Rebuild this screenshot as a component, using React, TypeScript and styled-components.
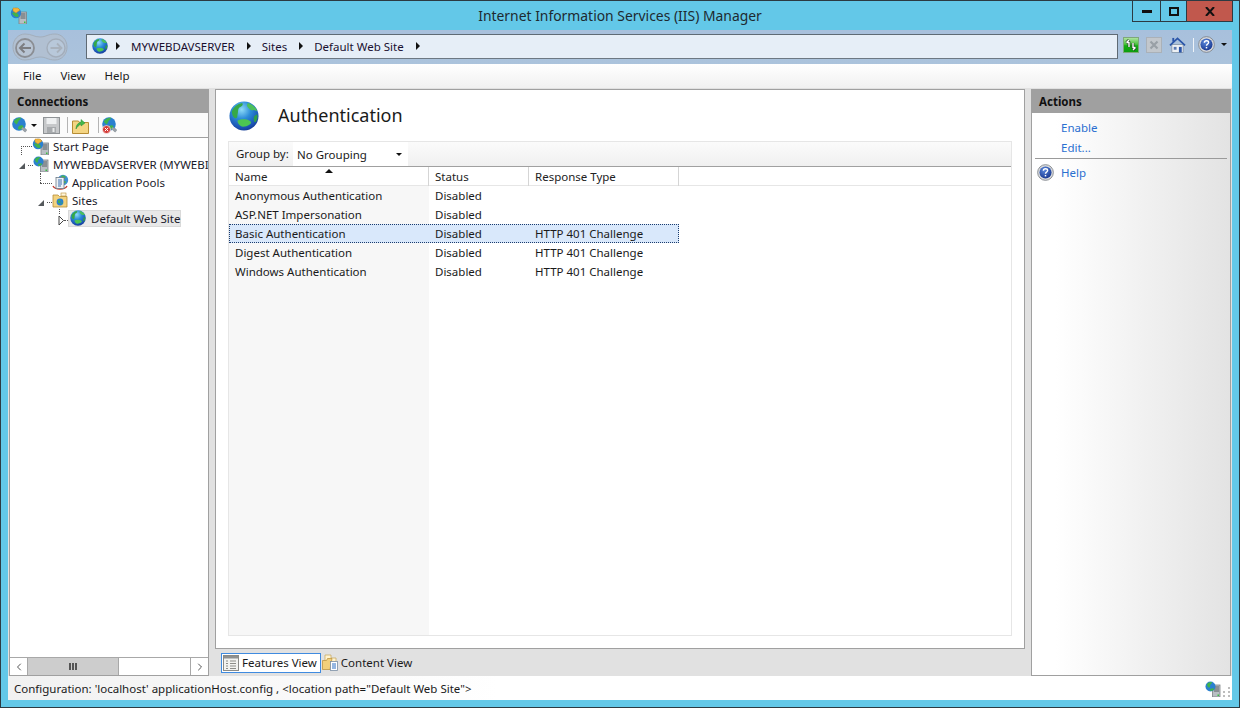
import { useId } from 'react';
import styled, { createGlobalStyle } from 'styled-components';
import { ChevronLeft, ChevronRight } from 'lucide-react';

const GlobalStyle = createGlobalStyle`
  html, body { margin: 0; padding: 0; }
  body {
    font-family: "Noto Sans", "Liberation Sans", sans-serif;
    font-size: 11.5px;
    color: #1a1a1a;
    overflow: hidden;
  }
`;

function Globe({ size = 16 }: { size?: number }) {
  const id = useId();
  return (
    <svg width={size} height={size} viewBox="0 0 32 32" style={{ flex: 'none' }}>
      <defs>
        <radialGradient id={id} cx="0.42" cy="0.28" r="0.8">
          <stop offset="0" stopColor="#8fdcf8" />
          <stop offset="0.4" stopColor="#2b8bd8" />
          <stop offset="0.8" stopColor="#1a4fb0" />
          <stop offset="1" stopColor="#0f2f80" />
        </radialGradient>
      </defs>
      <circle cx="16" cy="16" r="15.500" fill={`url(#${id})`} />
      <path d="M3 11c2-5 6-8 11-9 2 2-1 4-3 5-2 2-1 5-2 8 0 3-1 4-3 3-2-1-3-4-3-7z" fill="#36a848" />
      <path d="M20 2c4 1 8 4 10 8-2 1-3-1-5 0-2 0-4-2-6-5z" fill="#4cc05a" />
      <path d="M9 21c4-2 9-2 13 0 2 1 2 3 0 4-3 2-7 3-9 2-2-1-4-4-4-6z" fill="#4cc552" />
      <path d="M27 16l3-2c1 3 0 7-2 9-2-1-2-5-1-7z" fill="#2f9f48" />
    </svg>
  );
}

function ServerGlobe({ size = 16 }: { size?: number }) {
  return (
    <svg width={size} height={size} viewBox="0 0 16 16" style={{ flex: 'none' }}>
      <rect x="7.500" y="4" width="7.500" height="12" fill="#b9bec3" stroke="#7d8286" strokeWidth="0.8" />
      <path d="M9 6h5M9 8h5M9 10h5" stroke="#5b6065" strokeWidth="1" />
      <rect x="12.500" y="13.500" width="1.500" height="1.500" fill="#36c23f" />
      <circle cx="5.500" cy="5.500" r="5" fill="#2a80cf" />
      <path d="M2 3c2-2 4-2 5-2 0 2-2 2-2 4s-1 2-2 1-1-2-1-3zM5 8c2-1 4-1 4 0s-2 2-3 2-1-1-1-2z" fill="#3fb34c" />
    </svg>
  );
}

function StartPageIcon() {
  return (
    <svg width="17" height="17" viewBox="0 0 17 17" style={{ flex: 'none' }}>
      <rect x="9" y="5" width="7.500" height="12" fill="#b9bec3" stroke="#7d8286" strokeWidth="0.8" />
      <path d="M10.500 7h5M10.500 9h5M10.500 11h5" stroke="#5b6065" strokeWidth="1" />
      <rect x="14" y="14.500" width="1.500" height="1.500" fill="#36c23f" />
      <circle cx="6" cy="6" r="5.200" fill="#2a80cf" />
      <path d="M2 6c1 2 3 4 5 4s2-2 1-3-4-2-6-1z" fill="#3fb34c" />
      <path d="M3 1h5l2 2-4 3-3-2z" fill="#f3b73c" stroke="#c98a1b" strokeWidth="0.5" />
    </svg>
  );
}

function PoolsIcon() {
  return (
    <svg width="17" height="17" viewBox="0 0 17 17" style={{ flex: 'none' }}>
      <circle cx="11" cy="6" r="5.200" fill="#3f8fd6" />
      <path d="M9 2c2-1 4 0 5 1-1 2-3 2-4 1zM11 7c2 0 3 0 3 1s-2 2-3 1z" fill="#46b455" />
      <path d="M1 12c1 2 4 3 7 3s6-1 7-3" fill="none" stroke="#c43a2e" strokeWidth="1.400" />
      <rect x="4" y="3.500" width="8" height="11" fill="#eef2f6" stroke="#6c7a88" strokeWidth="0.8" />
      <path d="M6 6h4M6 8h4M6 10h4M6 12h3" stroke="#3f6fae" strokeWidth="1" />
    </svg>
  );
}

function SitesIcon() {
  return (
    <svg width="16" height="16" viewBox="0 0 16 16" style={{ flex: 'none' }}>
      <path d="M1 3h5l1.500 1.500H15V15H1z" fill="#f2d27f" stroke="#b78d35" strokeWidth="0.8" />
      <rect x="9" y="1" width="5" height="3" fill="#fff6dc" stroke="#b78d35" strokeWidth="0.6" />
      <circle cx="8" cy="10" r="3.400" fill="#2a80cf" />
      <path d="M6 8.500c1.500-.5 3 .5 2.500 1.500S7 12 6.500 11s-1-2-.5-2.500zM9 11l1.500-.5-.5 2z" fill="#3fb34c" />
    </svg>
  );
}

function ConnectGlobe({ bad }: { bad?: boolean }) {
  return (
    <svg width="17" height="17" viewBox="0 0 17 17" style={{ flex: 'none' }}>
      <path d="M9 9l5 5" stroke="#8c949b" strokeWidth="3" />
      <circle cx="7" cy="7" r="6.800" fill="#2a80cf" />
      <path d="M2 4c2-3 5-3.500 7-3.500 0 2-2 2.500-3 4.500s-1 3-2 2-2.500-2-2-3zM7 9c2-1 4.500-1 4.500 1s-3 2.500-4.500 2.500-1-2.500 0-3.500z" fill="#3fb34c" />
      <path d="M10 11l4 3.500" stroke="#9aa2a8" strokeWidth="2.500" />
      {bad && (
        <>
          <circle cx="4.500" cy="12.500" r="4" fill="#d43a36" stroke="#fff" strokeWidth="0.6" />
          <path d="M2.800 10.800l3.400 3.400M6.200 10.800l-3.400 3.400" stroke="#fff" strokeWidth="1" />
        </>
      )}
    </svg>
  );
}

function SaveIcon() {
  return (
    <svg width="17" height="17" viewBox="0 0 17 17" style={{ flex: 'none' }}>
      <rect x="0.500" y="0.500" width="16" height="16" fill="#c6c8ca" stroke="#8f9396" />
      <rect x="3.500" y="1" width="10" height="6" fill="#eef0f1" />
      <rect x="4" y="10" width="9" height="6" fill="#a7aaad" />
      <rect x="9.500" y="11" width="2" height="4" fill="#e8e9ea" />
    </svg>
  );
}

function FolderUpIcon() {
  return (
    <svg width="17" height="17" viewBox="0 0 17 17" style={{ flex: 'none' }}>
      <path d="M0.500 4h6l1 1.500h9V16.500H.5z" fill="#f4d583" stroke="#b78d35" />
      <path d="M4 12c0-4 2-6 5-7V2.500l4 3.500-4 3V7C7 8 5 10 4 12z" fill="#44b84a" stroke="#2b8a34" strokeWidth="0.5" />
    </svg>
  );
}

function RefreshIcon() {
  return (
    <svg width="16" height="16" viewBox="0 0 16 16" style={{ flex: 'none' }}>
      <defs>
        <linearGradient id="refresh-bg" x1="0" y1="0" x2="0" y2="1">
          <stop offset="0" stopColor="#b4e6a6" />
          <stop offset="0.45" stopColor="#4cc23e" />
          <stop offset="0.55" stopColor="#15ad14" />
          <stop offset="1" stopColor="#0c9c0e" />
        </linearGradient>
      </defs>
      <rect x="0.500" y="0.500" width="15" height="15" fill="url(#refresh-bg)" stroke="#7ea87a" />
      <path d="M6 10V5.500H3.500M3.500 5.500L6 3" fill="none" stroke="#1c2a1c" strokeWidth="2.600" />
      <path d="M10 6v4.500h2.500M12.500 10.500L10 13" fill="none" stroke="#1c2a1c" strokeWidth="2.600" />
      <path d="M6 10V5.500H3.500M3.500 5.500L6 3" fill="none" stroke="#fff" strokeWidth="1.400" />
      <path d="M10 6v4.500h2.500M12.500 10.500L10 13" fill="none" stroke="#fff" strokeWidth="1.400" />
    </svg>
  );
}

function StopIcon() {
  return (
    <svg width="16" height="16" viewBox="0 0 16 16" style={{ flex: 'none' }}>
      <rect x="0.500" y="0.500" width="15" height="15" fill="#c2c7cc" stroke="#aab1b8" />
      <path d="M4.500 4.500l7 7M11.500 4.500l-7 7" stroke="#99a0a6" strokeWidth="2.200" />
    </svg>
  );
}

function HomeIcon() {
  return (
    <svg width="17" height="16" viewBox="0 0 18 17" style={{ flex: 'none' }}>
      <path d="M3 8h12v8.500H3z" fill="#eef1f4" stroke="#7b8c9e" strokeWidth="0.8" />
      <path d="M1 9L9 1.500 17 9" fill="none" stroke="#2a55a8" strokeWidth="1.800" />
      <rect x="3.500" y="1" width="2" height="4" fill="#2a55a8" />
      <rect x="10.500" y="10.500" width="3" height="6" fill="#2a55a8" />
      <rect x="5" y="10.500" width="3" height="3" fill="#5a7ab0" />
    </svg>
  );
}

function HelpIcon({ size }: { size: number }) {
  const id = useId();
  return (
    <svg width={size} height={size} viewBox="0 0 16 16" style={{ flex: 'none' }}>
      <defs>
        <radialGradient id={id} cx="0.4" cy="0.3" r="0.8">
          <stop offset="0" stopColor="#5a88dc" />
          <stop offset="1" stopColor="#112f88" />
        </radialGradient>
      </defs>
      <circle cx="8" cy="8" r="7.400" fill="#d8dadd" stroke="#7d8288" strokeWidth="0.8" />
      <circle cx="8" cy="8" r="5.700" fill={`url(#${id})`} />
      <path d="M6 6.300c0-1.200 1-1.800 2-1.800s2 .6 2 1.700c0 1.300-2 1.500-2 3" fill="none" stroke="#fff" strokeWidth="1.300" />
      <rect x="7.300" y="10.300" width="1.400" height="1.400" fill="#fff" />
    </svg>
  );
}

function FeaturesIcon() {
  return (
    <svg width="16" height="16" viewBox="0 0 16 16" style={{ flex: 'none' }}>
      <rect x="0.500" y="0.500" width="15" height="15" fill="#f3f3f0" stroke="#8a8a86" />
      <rect x="1" y="1" width="14" height="2.500" fill="#8e9090" />
      <path d="M3 6h2M3 8.500h2M3 11h2M3 13.500h2M7 6h6M7 8.500h6M7 11h6M7 13.500h6" stroke="#8d8d88" strokeWidth="1" />
    </svg>
  );
}

function ContentIcon() {
  return (
    <svg width="16" height="17" viewBox="0 0 16 17" style={{ flex: 'none' }}>
      <path d="M3 1h6v3h5v4H3z" fill="#fff3cf" stroke="#c4a458" strokeWidth="0.7" />
      <path d="M.5 6.500h4l1-2H10l-2 11H.5z" fill="#f1cf7a" stroke="#b78d35" strokeWidth="0.7" />
      <rect x="8.500" y="7.500" width="7" height="9" fill="#fff" stroke="#7b8ea5" strokeWidth="0.8" />
      <path d="M10 10h4M10 12h4M10 14h4" stroke="#2a6fc4" strokeWidth="1" />
    </svg>
  );
}

function NavButtons() {
  return (
    <svg width="56" height="28" viewBox="0 0 56 28" style={{ flex: 'none' }}>
      <path d="M13 1c7 0 9 3 15 3s8-3 15-3c7 0 12 6 12 13s-5 13-12 13c-7 0-9-3-15-3s-8 3-15 3C6 27 1 21 1 14S6 1 13 1z" fill="#b1c0d2" stroke="#a3aebb" />
      <circle cx="13" cy="15" r="9" fill="#b8c4d3" stroke="#8b8e94" strokeWidth="1.800" />
      <path d="M19 15H8M12.500 10.500L8 15l4.500 4.500" fill="none" stroke="#7c7d81" strokeWidth="2" />
      <circle cx="44" cy="15" r="9" fill="#b8c8da" stroke="#a3adba" strokeWidth="1.400" />
      <path d="M38.500 15h11M45 10.500l4.500 4.500-4.500 4.500" fill="none" stroke="#a8b1bc" strokeWidth="1.800" />
    </svg>
  );
}

const Win = styled.div`
  box-sizing: border-box;
  width: 1240px;
  height: 708px;
  border: 1px solid #2c3a42;
  background: #63c8e8;
  padding: 0 7px 7px;
  display: flex;
  flex-direction: column;
`;

const TitleBar = styled.header`
  height: 29px;
  flex: none;
  display: grid;
  grid-template-columns: 1fr auto 1fr;
  align-items: start;
`;

const AppIcon = styled.div`
  padding: 6px 0 0 2px;
`;

const TitleText = styled.div`
  font-size: 13.9px;
  line-height: 30px;
  color: #1e2a30;
`;

const WinControls = styled.div`
  justify-self: end;
  display: flex;
  height: 21px;
  margin-right: -1px;
  border: 1px solid #2c3a42;
  border-top: 0;
  box-sizing: border-box;
`;

const WinBtn = styled.div<{ $w: number; $close?: boolean }>`
  width: ${p => p.$w}px;
  display: flex;
  align-items: center;
  justify-content: center;
  background: ${p => (p.$close ? '#c1584d' : 'transparent')};
  & + & {
    border-left: 1px solid #2c3a42;
  }
`;

const Client = styled.div`
  flex: 1;
  min-height: 0;
  display: flex;
  flex-direction: column;
  background: #e1e1e1;
`;

const AddressRow = styled.div`
  height: 34px;
  flex: none;
  box-sizing: border-box;
  padding: 3px 6px 0 4px;
  display: flex;
  align-items: flex-start;
  background: linear-gradient(#a8c0dc, #abc3dc);
`;

const Breadcrumb = styled.div`
  flex: none;
  width: 1032px;
  height: 25px;
  box-sizing: border-box;
  margin: 1px 0 0 18px;
  padding: 0 0 1px 5px;
  display: flex;
  align-items: center;
  background: #e6eef7;
  border: 1px solid #5f6a74;
  border-bottom-color: #6d7883;
`;

const Crumb = styled.span`
  margin-right: 12px;
  color: #1a1030;
`;

const CrumbArrow = styled.span<{ $first?: boolean }>`
  width: 0;
  height: 0;
  margin: 0 11px 0 ${p => (p.$first ? '8px' : '0')};
  border-left: 4px solid #111;
  border-top: 4px solid transparent;
  border-bottom: 4px solid transparent;
`;

const NavTools = styled.div`
  display: flex;
  align-items: center;
  margin: 3px 0 0 5px;
  gap: 7px;
`;

const ToolSep = styled.span`
  width: 1px;
  height: 14px;
  background: #eef3f8;
  margin: 0 -3px 0 0;
`;

const SmallCaret = styled.span<{ $ml?: number; $mr?: number }>`
  flex: none;
  width: 0;
  height: 0;
  margin-left: ${p => p.$ml ?? 0}px;
  margin-right: ${p => p.$mr ?? 0}px;
  border-top: 3px solid #111;
  border-left: 3px solid transparent;
  border-right: 3px solid transparent;
`;

const MenuBar = styled.nav`
  height: 24px;
  flex: none;
  box-sizing: border-box;
  padding: 0 0 1px 15px;
  display: flex;
  align-items: center;
  gap: 19px;
  background: linear-gradient(#ffffff, #f1f1f1);
`;

const MenuItem = styled.span`
  color: #1a1a1a;
`;

const Main = styled.main`
  flex: 1;
  min-height: 0;
  display: grid;
  grid-template-columns: 200px 810px 200px;
  gap: 6px;
  padding: 1px 1px 0;
`;

const SidePanel = styled.section<{ $fade?: boolean }>`
  display: flex;
  flex-direction: column;
  min-height: 0;
  box-sizing: border-box;
  border: 1px solid #a0a0a0;
  background: ${p => (p.$fade ? 'linear-gradient(90deg, #ffffff 12%, #e3e3e3 100%)' : '#fff')};
`;

const PanelHeader = styled.h2`
  margin: 0;
  height: 23px;
  flex: none;
  background: #a0a0a0;
  font-size: 11.5px;
  font-weight: 700;
  line-height: 24px;
  padding-left: 7px;
  color: #111;
`;

const ConnTools = styled.div`
  height: 25px;
  flex: none;
  box-sizing: border-box;
  border-bottom: 1px solid #a0a0a0;
  display: flex;
  align-items: center;
  padding-left: 2px;
  background: #fbfbfb;
`;

const ConnSep = styled.span<{ $ml: number; $mr: number }>`
  width: 1px;
  height: 16px;
  background: #b4b4b4;
  margin: 0 ${p => p.$mr}px 0 ${p => p.$ml}px;
`;

const Tree = styled.div`
  flex: 1;
  min-height: 0;
  overflow: hidden;
  margin-top: -1px;
`;

const TreeRow = styled.div<{ $indent: number }>`
  position: relative;
  height: 18px;
  padding-left: ${p => p.$indent}px;
  display: flex;
  align-items: center;
  white-space: nowrap;
`;

const DotsH = styled.span<{ $left: number; $top: number; $w: number }>`
  position: absolute;
  left: ${p => p.$left}px;
  top: ${p => p.$top}px;
  width: ${p => p.$w}px;
  border-top: 1px dotted #555;
`;

const DotsV = styled.span<{ $left: number; $top: number; $h: number }>`
  position: absolute;
  left: ${p => p.$left}px;
  top: ${p => p.$top}px;
  height: ${p => p.$h}px;
  border-left: 1px dotted #555;
`;

const Expander = styled.span<{ $left: number; $top: number }>`
  position: absolute;
  left: ${p => p.$left}px;
  top: ${p => p.$top}px;
  width: 6px;
  height: 6px;
  background: #55595c;
  clip-path: polygon(100% 0, 100% 100%, 0 100%);
`;

const Closed = styled.svg<{ $left: number }>`
  position: absolute;
  left: ${p => p.$left}px;
  top: 6px;
`;

const TreeLabel = styled.span<{ $gap?: number }>`
  margin-left: ${p => p.$gap ?? 4}px;
  color: #1a1a2a;
`;

const SelectedNode = styled.span`
  display: flex;
  align-items: center;
  width: 113px;
  height: 17px;
  box-sizing: border-box;
  padding-left: 1px;
  background: #e8e8e8;
  border: 1px solid #d9d9d9;
`;

const ScrollBar = styled.div`
  height: 17px;
  flex: none;
  display: grid;
  grid-template-columns: 17px 92px 1fr 17px;
  border-top: 1px solid #a8a8a8;
`;

const ScrollBtn = styled.div`
  display: flex;
  align-items: center;
  justify-content: center;
  background: #fff;
  color: #555;
`;

const ScrollThumb = styled.div`
  display: flex;
  align-items: center;
  justify-content: center;
  gap: 1px;
  background: #cdcdcd;
  border-left: 1px solid #a8a8a8;
  border-right: 1px solid #a8a8a8;
`;

const ThumbGrip = styled.span`
  width: 2px;
  height: 7px;
  background: #555;
`;

const ScrollTrack = styled.div`
  background: #fff;
  border-right: 1px solid #a8a8a8;
`;

const Center = styled.div`
  display: flex;
  flex-direction: column;
  min-height: 0;
`;

const Page = styled.section`
  flex: 1;
  min-height: 0;
  box-sizing: border-box;
  background: #fff;
  border: 1px solid #a0a0a0;
  padding: 0 12px 12px;
  display: flex;
  flex-direction: column;
`;

const PageHead = styled.div`
  height: 51px;
  flex: none;
  display: flex;
  align-items: center;
  gap: 19px;
  padding-left: 1px;
`;

const PageTitle = styled.h1`
  margin: 0 0 2px;
  font-size: 18px;
  font-weight: 400;
  color: #1a1a1a;
`;

const GroupPanel = styled.div`
  flex: 1;
  min-height: 0;
  display: flex;
  flex-direction: column;
  border: 1px solid #e6e6e6;
`;

const GroupBar = styled.div`
  height: 24px;
  flex: none;
  display: flex;
  align-items: stretch;
  padding-left: 7px;
  background: linear-gradient(#fbfbfb, #f0f0f0);
  border-bottom: 1px solid #a0a0a0;
`;

const GroupLabel = styled.span`
  flex: none;
  width: 57px;
  line-height: 24px;
`;

const Combo = styled.div`
  width: 115px;
  box-sizing: border-box;
  padding: 0 6px 0 4px;
  background: #fff;
  display: flex;
  align-items: center;
  justify-content: space-between;
`;

const ColumnsRow = styled.div`
  display: grid;
  grid-template-columns: 200px 100px 150px;
  height: 19px;
  flex: none;
  border-bottom: 1px solid #e6e6e6;
  box-sizing: border-box;
  position: relative;
`;

const ColumnHead = styled.div`
  padding-left: 6px;
  line-height: 19px;
  border-right: 1px solid #d5d5d5;
  color: #222;
`;

const SortMark = styled.span`
  position: absolute;
  left: 96px;
  top: 2px;
  border-bottom: 4px solid #111;
  border-left: 4px solid transparent;
  border-right: 4px solid transparent;
`;

const Rows = styled.div`
  flex: 1;
  background: linear-gradient(90deg, #f7f7f7 200px, #ffffff 200px);
`;

const Row = styled.div<{ $selected?: boolean }>`
  display: grid;
  grid-template-columns: 200px 100px 150px;
  width: 450px;
  height: 19px;
  box-sizing: border-box;
  line-height: 20px;
  background: ${p => (p.$selected ? '#d9e8fb' : 'transparent')};
  outline: ${p => (p.$selected ? '1px dotted #1b3c6e' : 'none')};
  outline-offset: -1px;
`;

const Cell = styled.span`
  padding-left: 6px;
  color: #1a1a1a;
  white-space: nowrap;
`;

const ViewTabs = styled.div`
  height: 27px;
  flex: none;
  display: flex;
  align-items: center;
  padding-left: 6px;
  gap: 1px;
`;

const ViewTab = styled.div<{ $active?: boolean }>`
  display: flex;
  align-items: center;
  gap: 3px;
  height: 20px;
  box-sizing: border-box;
  padding: ${p => (p.$active ? '0 3px 0 1px' : '0')};
  background: ${p => (p.$active ? '#fff' : 'transparent')};
  border: ${p => (p.$active ? '1px solid #3f8be0' : '0')};
  color: #1a1a1a;
`;

const ActionList = styled.div`
  display: flex;
  flex-direction: column;
  padding-top: 4px;
`;

const ActionLink = styled.a`
  display: flex;
  align-items: center;
  height: 20px;
  padding-left: 29px;
  color: #2a6fd0;
`;

const ActionHelp = styled(ActionLink)`
  height: 22px;
  padding-left: 5px;
  gap: 7px;
  margin-top: 2px;
`;

const ActionRule = styled.hr`
  margin: 1px 3px 0 3px;
  border: 0;
  height: 1px;
  background: #9a9a9a;
`;

const StatusBar = styled.footer`
  height: 24px;
  flex: none;
  box-sizing: border-box;
  display: flex;
  align-items: center;
  justify-content: space-between;
  padding: 0 1px 0 6px;
  background: linear-gradient(90deg, #f1f1f1, #ffffff 40%);
  color: #1a1a1a;
`;

const Grip = styled.div`
  display: flex;
  align-items: flex-end;
  align-self: flex-end;
  padding-bottom: 3px;
  gap: 2px;
`;

const rows = [
  ['Anonymous Authentication', 'Disabled', ''],
  ['ASP.NET Impersonation', 'Disabled', ''],
  ['Basic Authentication', 'Disabled', 'HTTP 401 Challenge'],
  ['Digest Authentication', 'Disabled', 'HTTP 401 Challenge'],
  ['Windows Authentication', 'Disabled', 'HTTP 401 Challenge'],
];

export default function App() {
  return (
    <>
      <GlobalStyle />
      <Win>
        <TitleBar>
          <AppIcon>
            <StartPageIcon />
          </AppIcon>
          <TitleText>Internet Information Services (IIS) Manager</TitleText>
          <WinControls>
            <WinBtn $w={27}>
              <svg width="10" height="3"><rect width="10" height="3" fill="#111" /></svg>
            </WinBtn>
            <WinBtn $w={25}>
              <svg width="10" height="9"><rect x="1" y="1" width="8" height="7" fill="none" stroke="#111" strokeWidth="2" /></svg>
            </WinBtn>
            <WinBtn $w={45} $close>
              <svg width="10" height="9"><path d="M1 0l8 9M9 0l-8 9" stroke="#111" strokeWidth="2" /></svg>
            </WinBtn>
          </WinControls>
        </TitleBar>
        <Client>
          <AddressRow>
            <NavButtons />
            <Breadcrumb>
              <Globe />
              <CrumbArrow $first />
              <Crumb>MYWEBDAVSERVER</Crumb>
              <CrumbArrow />
              <Crumb>Sites</Crumb>
              <CrumbArrow />
              <Crumb>Default Web Site</Crumb>
              <CrumbArrow />
            </Breadcrumb>
            <NavTools>
              <RefreshIcon />
              <StopIcon />
              <HomeIcon />
              <ToolSep />
              <HelpIcon size={17} />
              <SmallCaret $ml={-1} />
            </NavTools>
          </AddressRow>
          <MenuBar>
            <MenuItem>File</MenuItem>
            <MenuItem>View</MenuItem>
            <MenuItem>Help</MenuItem>
          </MenuBar>
          <Main>
            <SidePanel>
              <PanelHeader>Connections</PanelHeader>
              <ConnTools>
                <ConnectGlobe />
                <SmallCaret $ml={2} $mr={6} />
                <SaveIcon />
                <ConnSep $ml={7} $mr={4} />
                <FolderUpIcon />
                <ConnSep $ml={9} $mr={3} />
                <ConnectGlobe bad />
              </ConnTools>
              <Tree>
                <TreeRow $indent={22}>
                  <DotsH $left={11} $top={9} $w={11} />
                  <DotsV $left={11} $top={9} $h={9} />
                  <StartPageIcon />
                  <TreeLabel>Start Page</TreeLabel>
                </TreeRow>
                <TreeRow $indent={23}>
                  <Expander $left={9} $top={8} />
                  <DotsH $left={18} $top={10} $w={5} />
                  <ServerGlobe />
                  <TreeLabel>MYWEBDAVSERVER (MYWEBI</TreeLabel>
                </TreeRow>
                <TreeRow $indent={42}>
                  <DotsV $left={30} $top={0} $h={10} />
                  <DotsH $left={30} $top={10} $w={12} />
                  <PoolsIcon />
                  <TreeLabel $gap={3}>Application Pools</TreeLabel>
                </TreeRow>
                <TreeRow $indent={42}>
                  <Expander $left={28} $top={9} />
                  <DotsH $left={37} $top={11} $w={5} />
                  <SitesIcon />
                  <TreeLabel>Sites</TreeLabel>
                </TreeRow>
                <TreeRow $indent={58}>
                  <DotsV $left={49} $top={0} $h={5} />
                  <Closed $left={48} width="7" height="11" viewBox="0 0 7 11">
                    <path d="M1 1l4.500 4.500L1 10z" fill="#fff" stroke="#444" />
                  </Closed>
                  <DotsH $left={54} $top={11} $w={4} />
                  <SelectedNode>
                    <Globe />
                    <TreeLabel $gap={5}>Default Web Site</TreeLabel>
                  </SelectedNode>
                </TreeRow>
              </Tree>
              <ScrollBar>
                <ScrollBtn>
                  <ChevronLeft size={12} strokeWidth={2} />
                </ScrollBtn>
                <ScrollThumb>
                  <ThumbGrip />
                  <ThumbGrip />
                  <ThumbGrip />
                </ScrollThumb>
                <ScrollTrack />
                <ScrollBtn>
                  <ChevronRight size={12} strokeWidth={2} />
                </ScrollBtn>
              </ScrollBar>
            </SidePanel>
            <Center>
              <Page>
                <PageHead>
                  <Globe size={30} />
                  <PageTitle>Authentication</PageTitle>
                </PageHead>
                <GroupPanel>
                  <GroupBar>
                    <GroupLabel>Group by:</GroupLabel>
                    <Combo>
                      No Grouping
                      <SmallCaret />
                    </Combo>
                  </GroupBar>
                  <ColumnsRow>
                    <ColumnHead>Name</ColumnHead>
                    <ColumnHead>Status</ColumnHead>
                    <ColumnHead>Response Type</ColumnHead>
                    <SortMark />
                  </ColumnsRow>
                  <Rows>
                    {rows.map(([name, status, type]) => (
                      <Row key={name} $selected={name === 'Basic Authentication'}>
                        <Cell>{name}</Cell>
                        <Cell>{status}</Cell>
                        <Cell>{type}</Cell>
                      </Row>
                    ))}
                  </Rows>
                </GroupPanel>
              </Page>
              <ViewTabs>
                <ViewTab $active>
                  <FeaturesIcon />
                  Features View
                </ViewTab>
                <ViewTab>
                  <ContentIcon />
                  Content View
                </ViewTab>
              </ViewTabs>
            </Center>
            <SidePanel $fade>
              <PanelHeader>Actions</PanelHeader>
              <ActionList>
                <ActionLink>Enable</ActionLink>
                <ActionLink>Edit...</ActionLink>
                <ActionRule />
                <ActionHelp>
                  <HelpIcon size={17} />
                  Help
                </ActionHelp>
              </ActionList>
            </SidePanel>
          </Main>
          <StatusBar>
            <span>Configuration: 'localhost' applicationHost.config , &lt;location path="Default Web Site"&gt;</span>
            <Grip>
              <ServerGlobe />
              <svg width="8" height="11" viewBox="0 0 8 11">
                <path d="M5 1h2v2H5zM0 5h2v2H0zM5 5h2v2H5zM0 9h2v2H0zM5 9h2v2H5z" fill="#bdbdbd" />
              </svg>
            </Grip>
          </StatusBar>
        </Client>
      </Win>
    </>
  );
}
